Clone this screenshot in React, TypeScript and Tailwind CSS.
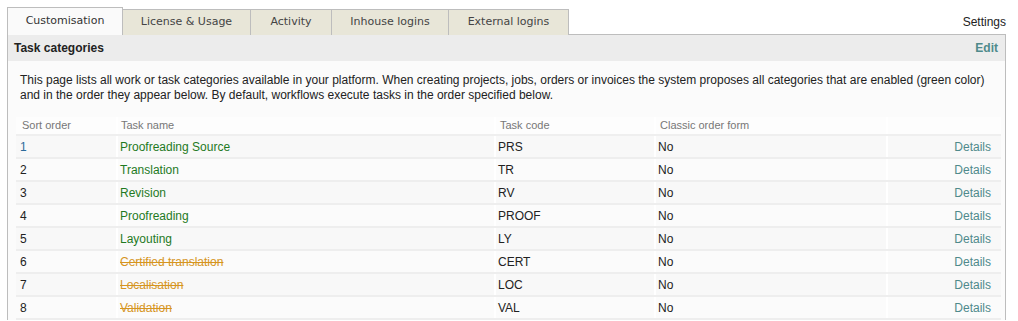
import React from "react";

const tabs = [
  { label: "Customisation", w: "w-[116px]", active: true },
  { label: "License & Usage", w: "w-[129px]" },
  { label: "Activity", w: "w-[82px]" },
  { label: "Inhouse logins", w: "w-[118px]" },
  { label: "External logins", w: "w-[121px]" },
];

const rows = [
  { n: "1", name: "Proofreading Source", code: "PRS", on: true },
  { n: "2", name: "Translation", code: "TR", on: true },
  { n: "3", name: "Revision", code: "RV", on: true },
  { n: "4", name: "Proofreading", code: "PROOF", on: true },
  { n: "5", name: "Layouting", code: "LY", on: true },
  { n: "6", name: "Certified translation", code: "CERT", on: false },
  { n: "7", name: "Localisation", code: "LOC", on: false },
  { n: "8", name: "Validation", code: "VAL", on: false },
];

export default function App() {
  return (
    <div className="w-[1018px] h-[321px] overflow-hidden bg-white text-[12px] text-[#222] font-['Liberation_Sans',Arial,sans-serif]">
      <div className="flex items-end pl-[7px] pr-[12px] pt-[7px]">
        {tabs.map((t) =>
          t.active ? (
            <div
              key={t.label}
              className={`${t.w} h-[28px] -mb-px relative z-10 flex items-center justify-center border border-b-0 border-[#bdbdbd] bg-[#fafafa] font-['DejaVu_Sans',Verdana,sans-serif] text-[11px] text-[#333]`}
            >
              {t.label}
            </div>
          ) : (
            <div
              key={t.label}
              className={`${t.w} h-[26px] -mb-px -ml-px flex items-center justify-center border border-b-0 border-[#bdbdbd] bg-[#e8e6d8] font-['DejaVu_Sans',Verdana,sans-serif] text-[11px] text-[#444]`}
            >
              {t.label}
            </div>
          )
        )}
        <div className="ml-auto pb-[3px] text-[12px] text-[#222]">Settings</div>
      </div>
      <div className="ml-[7px] w-[999px] border border-b-0 border-[#bdbdbd] bg-[#fbfbfb]">
        <div className="h-[26px] bg-[#ececec] flex items-center justify-between pl-[6px] pr-[7px]">
          <span className="font-bold text-[12px] text-[#222]">Task categories</span>
          <span className="font-bold text-[12px] text-[#4f8a8b]">Edit</span>
        </div>
        <div className="pt-[12px] pl-[8px]">
          <p className="pl-[4px] pr-[14px] leading-[15px] text-[12px] text-[#222]">
            This page lists all work or task categories available in your platform. When creating projects, jobs, orders or invoices the system proposes all categories that are enabled (green color) and in the order they appear below. By default, workflows execute tasks in the order specified below.
          </p>
          <div className="mt-[14px] w-[985px]">
            <div className="grid grid-cols-[100px_378px_160px_232px_115px] h-[19px] border-b-2 border-[#efefef] bg-[#fdfdfd] text-[11px] text-[#777]">
              <div className="pl-[6px] flex items-center">Sort order</div>
              <div className="pl-[3px] flex items-center border-l-2 border-white">Task name</div>
              <div className="pl-[4px] flex items-center border-l-2 border-white">Task code</div>
              <div className="pl-[4px] flex items-center border-l-2 border-white">Classic order form</div>
              <div className="border-l-2 border-white"></div>
            </div>
            {rows.map((r, i) => (
              <div
                key={r.n}
                className={`grid grid-cols-[100px_378px_160px_232px_115px] h-[23px] border-b-2 border-[#eeeeee] ${
                  i % 2 === 0 ? "bg-[#f8f8f8]" : "bg-[#fbfbfb]"
                }`}
              >
                <div className={`pl-[4px] flex items-center ${i === 0 ? "text-[#2b6a9a]" : "text-[#222]"}`}>{r.n}</div>
                <div className="pl-[2px] flex items-center border-l-2 border-white">
                  {r.on ? (
                    <span className="text-[#1f7a1f]">{r.name}</span>
                  ) : (
                    <span className="text-[#d6951f] line-through">{r.name}</span>
                  )}
                </div>
                <div className="pl-[2px] flex items-center border-l-2 border-white">{r.code}</div>
                <div className="pl-[2px] flex items-center border-l-2 border-white">No</div>
                <div className="pr-[10px] flex items-center justify-end border-l-2 border-white text-[#4f8a8b]">Details</div>
              </div>
            ))}
          </div>
        </div>
      </div>
    </div>
  );
}
